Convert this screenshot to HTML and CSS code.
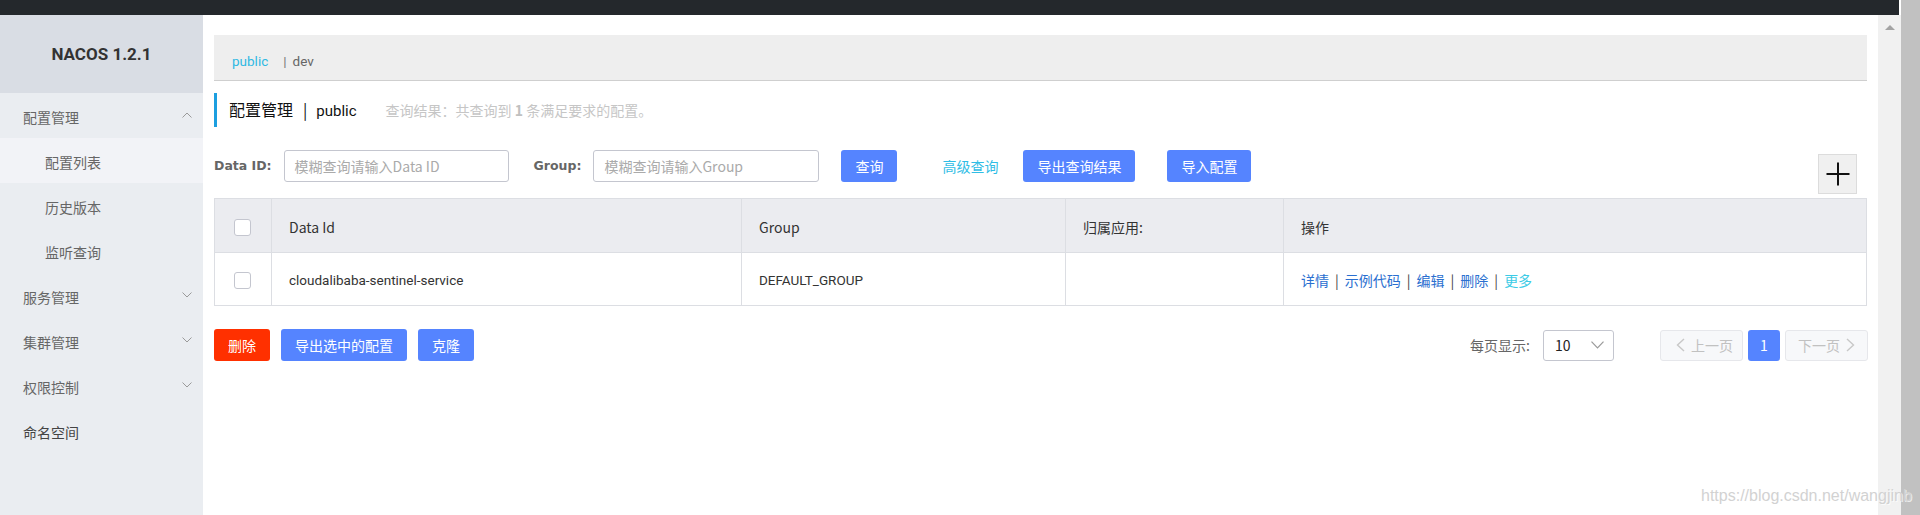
FILE: index.html
```html
<!DOCTYPE html>
<html lang="zh-CN">
<head>
<meta charset="utf-8">
<title>Nacos - 配置列表</title>
<link rel="stylesheet" href="styles.css">
</head>
<body>
<div class="screen">
  <div class="app">
    <div class="topbar"></div>
    <div class="frame">
      <aside class="sidebar">
        <div class="logo">NACOS 1.2.1</div>
        <ul class="menu">
          <li class="item"><span>配置管理</span><svg class="chev" width="10" height="6" viewBox="0 0 10 6"><polyline points="0.5,5.5 5,1 9.5,5.5" fill="none" stroke="#9a9a9a" stroke-width="1"/></svg></li>
          <li class="item sub active"><span>配置列表</span></li>
          <li class="item sub"><span>历史版本</span></li>
          <li class="item sub"><span>监听查询</span></li>
          <li class="item"><span>服务管理</span><svg class="chev" width="10" height="6" viewBox="0 0 10 6"><polyline points="0.5,0.5 5,5 9.5,0.5" fill="none" stroke="#9a9a9a" stroke-width="1"/></svg></li>
          <li class="item"><span>集群管理</span><svg class="chev" width="10" height="6" viewBox="0 0 10 6"><polyline points="0.5,0.5 5,5 9.5,0.5" fill="none" stroke="#9a9a9a" stroke-width="1"/></svg></li>
          <li class="item"><span>权限控制</span><svg class="chev" width="10" height="6" viewBox="0 0 10 6"><polyline points="0.5,0.5 5,5 9.5,0.5" fill="none" stroke="#9a9a9a" stroke-width="1"/></svg></li>
          <li class="item dark"><span>命名空间</span></li>
        </ul>
      </aside>

      <main class="main">
        <div class="ns-bar">
          <span class="ns ns-active">public</span><span class="ns-sep">|</span><span class="ns">dev</span>
        </div>

        <div class="page-title">
          <span class="title">配置管理<span class="title-bar">|</span><span class="title-ns">public</span></span>
          <span class="summary">查询结果：共查询到 <b>1</b> 条满足要求的配置。</span>
        </div>

        <div class="search">
          <span class="label">Data ID:</span>
          <span class="input input-dataid">模糊查询请输入Data ID</span>
          <span class="label">Group:</span>
          <span class="input input-group">模糊查询请输入Group</span>
          <span class="btn btn-query">查询</span>
          <span class="link-btn">高级查询</span>
          <span class="btn btn-export">导出查询结果</span>
          <span class="btn btn-import">导入配置</span>
          <span class="plus-btn"><svg width="24" height="24" viewBox="0 0 24 24"><path d="M12 0.5v23M0.5 12h23" stroke="#111" stroke-width="2" fill="none"/></svg></span>
        </div>

        <table class="grid">
          <colgroup>
            <col class="c-check"><col class="c-id"><col class="c-group"><col class="c-app"><col>
          </colgroup>
          <thead>
            <tr>
              <th class="check"><span class="cb"></span></th>
              <th>Data Id</th>
              <th>Group</th>
              <th>归属应用:</th>
              <th>操作</th>
            </tr>
          </thead>
          <tbody>
            <tr>
              <td class="check"><span class="cb"></span></td>
              <td class="latin">cloudalibaba-sentinel-service</td>
              <td class="latin">DEFAULT_GROUP</td>
              <td></td>
              <td class="ops"><span class="op">详情</span><span class="sep">|</span><span class="op">示例代码</span><span class="sep">|</span><span class="op">编辑</span><span class="sep">|</span><span class="op">删除</span><span class="sep">|</span><span class="op more">更多</span></td>
            </tr>
          </tbody>
        </table>

        <div class="footer">
          <div class="batch">
            <span class="btn btn-danger">删除</span>
            <span class="btn">导出选中的配置</span>
            <span class="btn">克隆</span>
          </div>
          <div class="pager">
            <span class="pager-label">每页显示:</span>
            <span class="select"><span class="select-val">10</span><svg width="13" height="8" viewBox="0 0 13 8"><polyline points="0.5,0.7 6.5,7 12.5,0.7" fill="none" stroke="#9a9a9a" stroke-width="1.2"/></svg></span>
            <span class="page-btn prev"><svg width="9" height="14" viewBox="0 0 9 14"><polyline points="8,1 1.5,7 8,13" fill="none" stroke="#c8c8c8" stroke-width="1.4"/></svg>上一页</span>
            <span class="page-num">1</span>
            <span class="page-btn next">下一页<svg width="9" height="14" viewBox="0 0 9 14"><polyline points="1,1 7.5,7 1,13" fill="none" stroke="#c8c8c8" stroke-width="1.4"/></svg></span>
          </div>
        </div>
      </main>

      <div class="scroll-inner"><span class="scroll-arrow"></span></div>
    </div>
  </div>
  <div class="scroll-outer"></div>
  <div class="watermark">https://blog.csdn.net/wangjinb</div>
</div>
</body>
</html>
```

FILE: styles.css
```css
* { box-sizing: border-box; }

html, body {
  margin: 0;
  padding: 0;
}

body {
  font-family: "Noto Sans CJK SC", "Noto Sans", sans-serif;
  font-size: 14px;
  color: #333;
  background: #fff;
}

.screen {
  position: relative;
  display: flex;
  width: 1920px;
  height: 515px;
  overflow: hidden;
}

.app {
  width: 1901px;
  display: flex;
  flex-direction: column;
}

.topbar {
  flex: none;
  width: 1899px;
  height: 15px;
  background: #24282c;
}

.frame {
  flex: 1;
  display: flex;
  min-height: 0;
}

/* sidebar */
.sidebar {
  flex: none;
  width: 203px;
  background: #eaedf1;
}

.logo {
  height: 78px;
  display: flex;
  align-items: center;
  justify-content: center;
  background: #d9dde4;
  font-family: Roboto, "Noto Sans", sans-serif;
  font-weight: bold;
  font-size: 17px;
  color: #333;
}

.menu {
  list-style: none;
  margin: 0;
  padding: 0;
}

.item {
  height: 45px;
  display: flex;
  align-items: center;
  justify-content: space-between;
  padding: 3px 11px 0 23px;
  color: #666;
  font-size: 14px;
  line-height: 20px;
}

.item .chev { margin-top: -4px; }

.item.sub { padding-left: 45px; }
.item.active { background: #f2f3f7; }
.item.dark { color: #444; }

/* main */
.main {
  flex: 1;
  min-width: 0;
  display: flex;
  flex-direction: column;
  padding: 20px 11px 0 11px;
  background: #fff;
}

.ns-bar {
  height: 46px;
  background: #eeeeee;
  border-bottom: 1px solid #cfcfcf;
  padding: 16px 0 0 18px;
  line-height: 20px;
  font-family: Roboto, "Noto Sans", sans-serif;
  font-size: 13.5px;
  color: #666;
}

.ns-active { color: #2fb9e3; }

.ns-sep {
  margin: 0 6px 0 15px;
  color: #777;
}

.page-title {
  margin-top: 12px;
  height: 34px;
  display: flex;
  align-items: center;
  border-left: 3px solid #1d9fe0;
  padding-left: 12px;
}

.title {
  font-size: 16px;
  color: #111;
  line-height: 22px;
}

.title-bar { margin: 0 9px 0 10px; }

.title-ns {
  font-family: Roboto, "Noto Sans", sans-serif;
  font-size: 15px;
}

.summary {
  margin-left: 29px;
  font-size: 14px;
  color: #c6c6c6;
  line-height: 20px;
}

.summary b { color: #c0c0c0; }

/* search row */
.search {
  margin-top: 23px;
  height: 48px;
  display: flex;
  align-items: flex-start;
}

.label {
  line-height: 32px;
  font-family: "DejaVu Sans", sans-serif;
  font-weight: bold;
  font-size: 12.5px;
  color: #666;
  margin-right: 12px;
}

.input {
  height: 32px;
  line-height: 30px;
  border: 1px solid #c4c6cf;
  border-radius: 3px;
  padding: 0 10px;
  color: #aaa;
  font-size: 14px;
}

.input-dataid { width: 225px; margin-right: 25px; }
.input-group { width: 226px; margin-right: 22px; }

.btn {
  display: inline-block;
  height: 32px;
  line-height: 32px;
  padding: 0 14px;
  border-radius: 3px;
  background: #5584ff;
  color: #fff;
  font-size: 14px;
  white-space: nowrap;
}

.link-btn {
  margin-left: 45px;
  line-height: 32px;
  color: #2fbde5;
  font-size: 14px;
}

.btn-export { margin-left: 25px; }
.btn-import { margin-left: 32px; }

.plus-btn {
  margin-left: auto;
  margin-right: 10px;
  margin-top: 4px;
  width: 39px;
  height: 40px;
  display: flex;
  align-items: center;
  justify-content: center;
  background: #f0f0f0;
  border: 1px solid #dcdcdc;
}

/* table */
.grid {
  width: 100%;
  border-collapse: collapse;
  table-layout: fixed;
  border: 1px solid #dcdee3;
}

.c-check { width: 57px; }
.c-id { width: 470px; }
.c-group { width: 324px; }
.c-app { width: 218px; }

.grid th, .grid td {
  border: 1px solid #dcdee3;
  text-align: left;
  font-weight: normal;
  font-size: 14px;
  color: #333;
  padding: 2px 17px 0 17px;
  line-height: 20px;
  white-space: nowrap;
}

.grid th {
  height: 54px;
  background: #ebecf0;
}

.grid td {
  height: 53px;
  background: #fff;
}

.grid td.latin {
  font-family: Roboto, "Noto Sans", sans-serif;
  font-size: 13.5px;
}

.grid .check {
  padding: 0;
  text-align: center;
}

.cb {
  display: inline-block;
  width: 17px;
  height: 17px;
  border: 1px solid #c4c6cf;
  border-radius: 3px;
  background: #fff;
  vertical-align: middle;
  margin-left: -1px;
}

.op { color: #2a6fd0; }
.op.more { color: #3ccbe6; }

.sep {
  margin: 0 6px;
  color: #444;
}

/* footer */
.footer {
  margin-top: 23px;
  display: flex;
  align-items: center;
  justify-content: space-between;
}

.batch {
  display: flex;
  gap: 11px;
}

.btn-danger { background: #ff3000; }

.pager {
  display: flex;
  align-items: center;
  margin-right: -1px;
}

.pager-label {
  color: #666;
  font-size: 14px;
  margin-right: 13px;
}

.select {
  width: 71px;
  height: 31px;
  border: 1px solid #c4c6cf;
  border-radius: 3px;
  display: flex;
  align-items: center;
  justify-content: space-between;
  padding: 0 9px 0 11px;
  margin-right: 46px;
}

.select-val {
  color: #222;
  font-size: 14px;
}

.page-btn {
  width: 83px;
  height: 31px;
  border: 1px solid #e6e7eb;
  border-radius: 3px;
  background: #f7f8fa;
  color: #c1c1c1;
  font-size: 14px;
  display: flex;
  align-items: center;
  gap: 6px;
}

.prev { padding-left: 15px; }
.next { padding-left: 12px; }

.page-num {
  width: 32px;
  height: 31px;
  margin: 0 5px;
  border-radius: 3px;
  background: #5584ff;
  color: #fff;
  font-size: 14px;
  display: flex;
  align-items: center;
  justify-content: center;
}

/* scrollbars */
.scroll-inner {
  flex: none;
  width: 23px;
  background: #f1f1f1;
  padding-top: 10px;
}

.scroll-arrow {
  display: block;
  width: 0;
  height: 0;
  margin: 0 auto;
  border-left: 5px solid transparent;
  border-right: 5px solid transparent;
  border-bottom: 5px solid #a3a3a3;
}

.scroll-outer {
  flex: none;
  width: 19px;
  background: #c1c1c1;
}

.watermark {
  position: absolute;
  left: 1701px;
  top: 487px;
  font-family: "Liberation Sans", Arial, sans-serif;
  font-size: 16px;
  line-height: 18px;
  color: #d2d2d2;
  text-shadow: 1px 1px 0 rgba(255, 255, 255, 0.7);
  white-space: nowrap;
}
```
